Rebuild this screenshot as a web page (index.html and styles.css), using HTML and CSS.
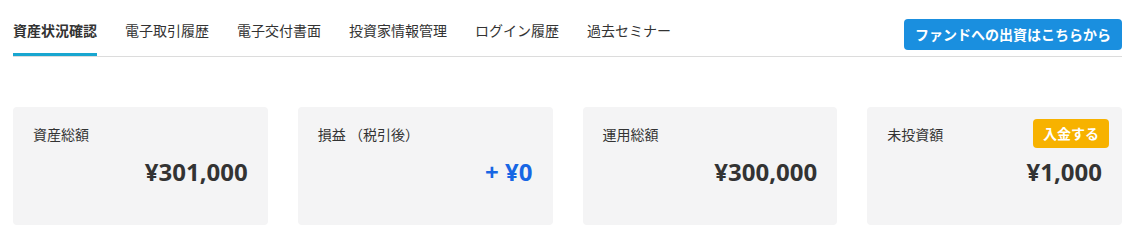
FILE: index.html
```html
<!DOCTYPE html>
<html lang="ja">
  <head>
    <meta charset="UTF-8" />
    <meta name="viewport" content="width=device-width, initial-scale=1.0" />
    <title>資産状況確認</title>
    <link rel="stylesheet" href="styles.css">
  </head>
  <body>
    <div class="page">
      <nav class="tabs">
        <a class="tab active" href="#">資産状況確認</a>
        <a class="tab" href="#">電子取引履歴</a>
        <a class="tab" href="#">電子交付書面</a>
        <a class="tab" href="#">投資家情報管理</a>
        <a class="tab" href="#">ログイン履歴</a>
        <a class="tab" href="#">過去セミナー</a>
        <a class="fund-btn" href="#">ファンドへの出資はこちらから</a>
      </nav>

      <div class="cards">
        <div class="card">
          <div class="card-head">
            <span class="card-label">資産総額</span>
          </div>
          <div class="card-value">¥301,000</div>
        </div>
        <div class="card">
          <div class="card-head">
            <span class="card-label">損益 （税引後）</span>
          </div>
          <div class="card-value profit">+ ¥0</div>
        </div>
        <div class="card">
          <div class="card-head">
            <span class="card-label">運用総額</span>
          </div>
          <div class="card-value">¥300,000</div>
        </div>
        <div class="card">
          <div class="card-head">
            <span class="card-label">未投資額</span>
            <a class="deposit-btn" href="#">入金する</a>
          </div>
          <div class="card-value">¥1,000</div>
        </div>
      </div>
    </div>
  </body>
</html>
```

FILE: styles.css
```css
body {
  margin: 0;
  font-family: "Noto Sans CJK JP", "Open Sans", sans-serif;
  color: #333;
  background: #fff;
}
a {
  text-decoration: none;
  color: inherit;
}
.page {
  padding: 0 15px 0 13px;
}
.tabs {
  display: flex;
  align-items: flex-end;
  height: 56px;
  border-bottom: 1px solid #dcdcdc;
}
.tab {
  font-size: 14px;
  line-height: 19px;
  padding-bottom: 13px;
  margin-right: 28px;
  border-bottom: 3px solid transparent;
  white-space: nowrap;
}
.tab.active {
  font-weight: bold;
  border-bottom-color: #18a6d0;
}
.fund-btn {
  margin-left: auto;
  align-self: flex-start;
  margin-top: 19px;
  height: 31px;
  line-height: 31px;
  padding: 0 11px;
  background-color: #1a8fdf;
  color: #fff;
  font-size: 14px;
  font-weight: bold;
  border-radius: 4px;
  white-space: nowrap;
}
.cards {
  display: grid;
  grid-template-columns: repeat(4, 1fr);
  gap: 30px;
  margin-top: 50px;
}
.card {
  background-color: #f4f4f5;
  border-radius: 4px;
  height: 118px;
  padding: 12px 20px 0 20px;
  box-sizing: border-box;
}
.card-head {
  display: flex;
  justify-content: space-between;
  align-items: center;
  height: 29px;
}
.card-label {
  font-size: 14px;
}
.deposit-btn {
  margin-right: -7px;
  height: 29px;
  line-height: 29px;
  padding: 0 10px;
  background-color: #f7b200;
  color: #fff;
  font-size: 14px;
  font-weight: bold;
  border-radius: 4px;
}
.card-value {
  margin-top: 9px;
  text-align: right;
  font-family: "Open Sans", sans-serif;
  font-size: 24px;
  font-weight: bold;
  line-height: 30px;
  color: #333;
}
.card-value.profit {
  color: #1766e4;
}
```
